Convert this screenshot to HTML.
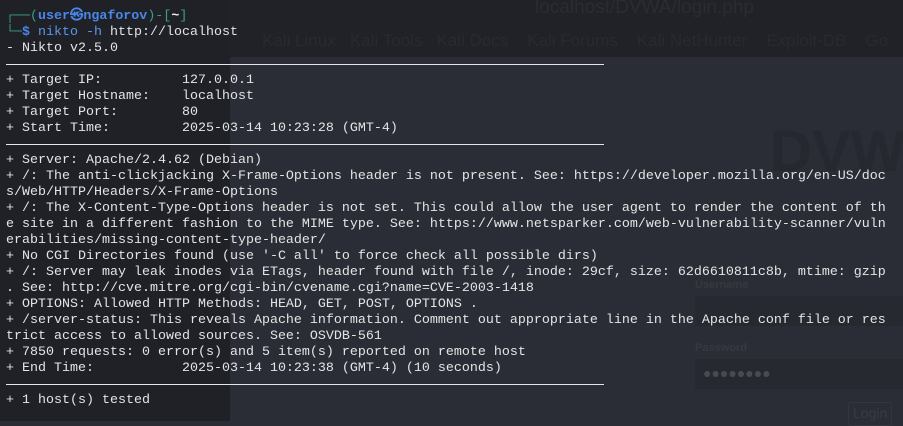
<!DOCTYPE html>
<html><head><meta charset="utf-8"><style>
html,body{margin:0;padding:0;}
body{width:903px;height:421px;overflow:hidden;position:relative;background:#2a2d35;font-family:"Liberation Mono",monospace;}
.bg{position:absolute;}
.t{position:absolute;left:6px;top:0;font-size:13.33px;line-height:16px;color:#e4e4e4;}
.row{height:16px;white-space:pre;}
.rule{height:16px;position:relative;}
.rule:after{content:"";position:absolute;left:0;width:598px;top:7px;border-top:1.5px solid #e6e6e6;}
.faint{position:absolute;font-family:"Liberation Sans",sans-serif;color:#2c2f36;white-space:nowrap;}
.g{color:#3a9e8e}.b{color:#4a86e8;font-weight:bold}.c{color:#5a96e6}
</style></head><body>
<div class="bg" style="left:230px;top:0;width:673px;height:57px;background:#202228"></div>
<div class="bg" style="left:0;top:0;width:230px;height:421px;background:#1f2127"></div>
<div class="faint" style="left:535px;top:-3px;font-size:19px;color:#292c33">localhost/DVWA/login.php</div>
<div class="faint" style="left:262px;top:31px;font-size:17px;color:#272a31">Kali Linux &nbsp; Kali Tools &nbsp; Kali Docs &nbsp;&nbsp; Kali Forums &nbsp;&nbsp; Kali NetHunter &nbsp;&nbsp; Exploit-DB &nbsp;&nbsp; Go</div>
<div class="faint" style="left:770px;top:118px;font-size:58px;font-weight:bold;color:#25282f">DVWA</div>
<div class="faint" style="left:695px;top:279px;font-size:11px;font-weight:bold;color:#363940">Username</div>
<div class="bg" style="left:695px;top:296px;width:208px;height:30px;background:#26292f"></div>
<div class="faint" style="left:695px;top:342px;font-size:11px;font-weight:bold;color:#363940">Password</div>
<div class="bg" style="left:695px;top:359px;width:208px;height:30px;background:#26292f"></div>
<div class="faint" style="left:703px;top:365px;font-size:14px;color:#484b52">●●●●●●●●</div>
<div class="bg" style="left:848px;top:402px;width:42px;height:22px;border:1px solid #33363d;border-radius:3px"></div>
<div class="faint" style="left:853px;top:405px;font-size:14px;color:#383b42">Login</div>
<div class="t" style="top:9px"><div class="row"><span class="g">┌──(</span><span class="b">user㉿ngaforov</span><span class="g">)-[</span><b style="color:#eee">~</b><span class="g">]</span></div><div class="row"><span class="g">└─</span><span class="b">$</span> <span class="c">nikto -h</span> http://localhost</div><div class="row">- Nikto v2.5.0</div><div class="rule"></div><div class="row">+ Target IP:          127.0.0.1</div><div class="row">+ Target Hostname:    localhost</div><div class="row">+ Target Port:        80</div><div class="row">+ Start Time:         2025-03-14 10:23:28 (GMT-4)</div><div class="rule"></div><div class="row">+ Server: Apache/2.4.62 (Debian)</div><div class="row">+ /: The anti-clickjacking X-Frame-Options header is not present. See: https://developer.mozilla.org/en-US/doc</div><div class="row">s/Web/HTTP/Headers/X-Frame-Options</div><div class="row">+ /: The X-Content-Type-Options header is not set. This could allow the user agent to render the content of th</div><div class="row">e site in a different fashion to the MIME type. See: https://www.netsparker.com/web-vulnerability-scanner/vuln</div><div class="row">erabilities/missing-content-type-header/</div><div class="row">+ No CGI Directories found (use '-C all' to force check all possible dirs)</div><div class="row">+ /: Server may leak inodes via ETags, header found with file /, inode: 29cf, size: 62d6610811c8b, mtime: gzip</div><div class="row">. See: http://cve.mitre.org/cgi-bin/cvename.cgi?name=CVE-2003-1418</div><div class="row">+ OPTIONS: Allowed HTTP Methods: HEAD, GET, POST, OPTIONS .</div><div class="row">+ /server-status: This reveals Apache information. Comment out appropriate line in the Apache conf file or res</div><div class="row">trict access to allowed sources. See: OSVDB-561</div><div class="row">+ 7850 requests: 0 error(s) and 5 item(s) reported on remote host</div><div class="row">+ End Time:           2025-03-14 10:23:38 (GMT-4) (10 seconds)</div><div class="rule"></div><div class="row">+ 1 host(s) tested</div></div>
</body></html>
